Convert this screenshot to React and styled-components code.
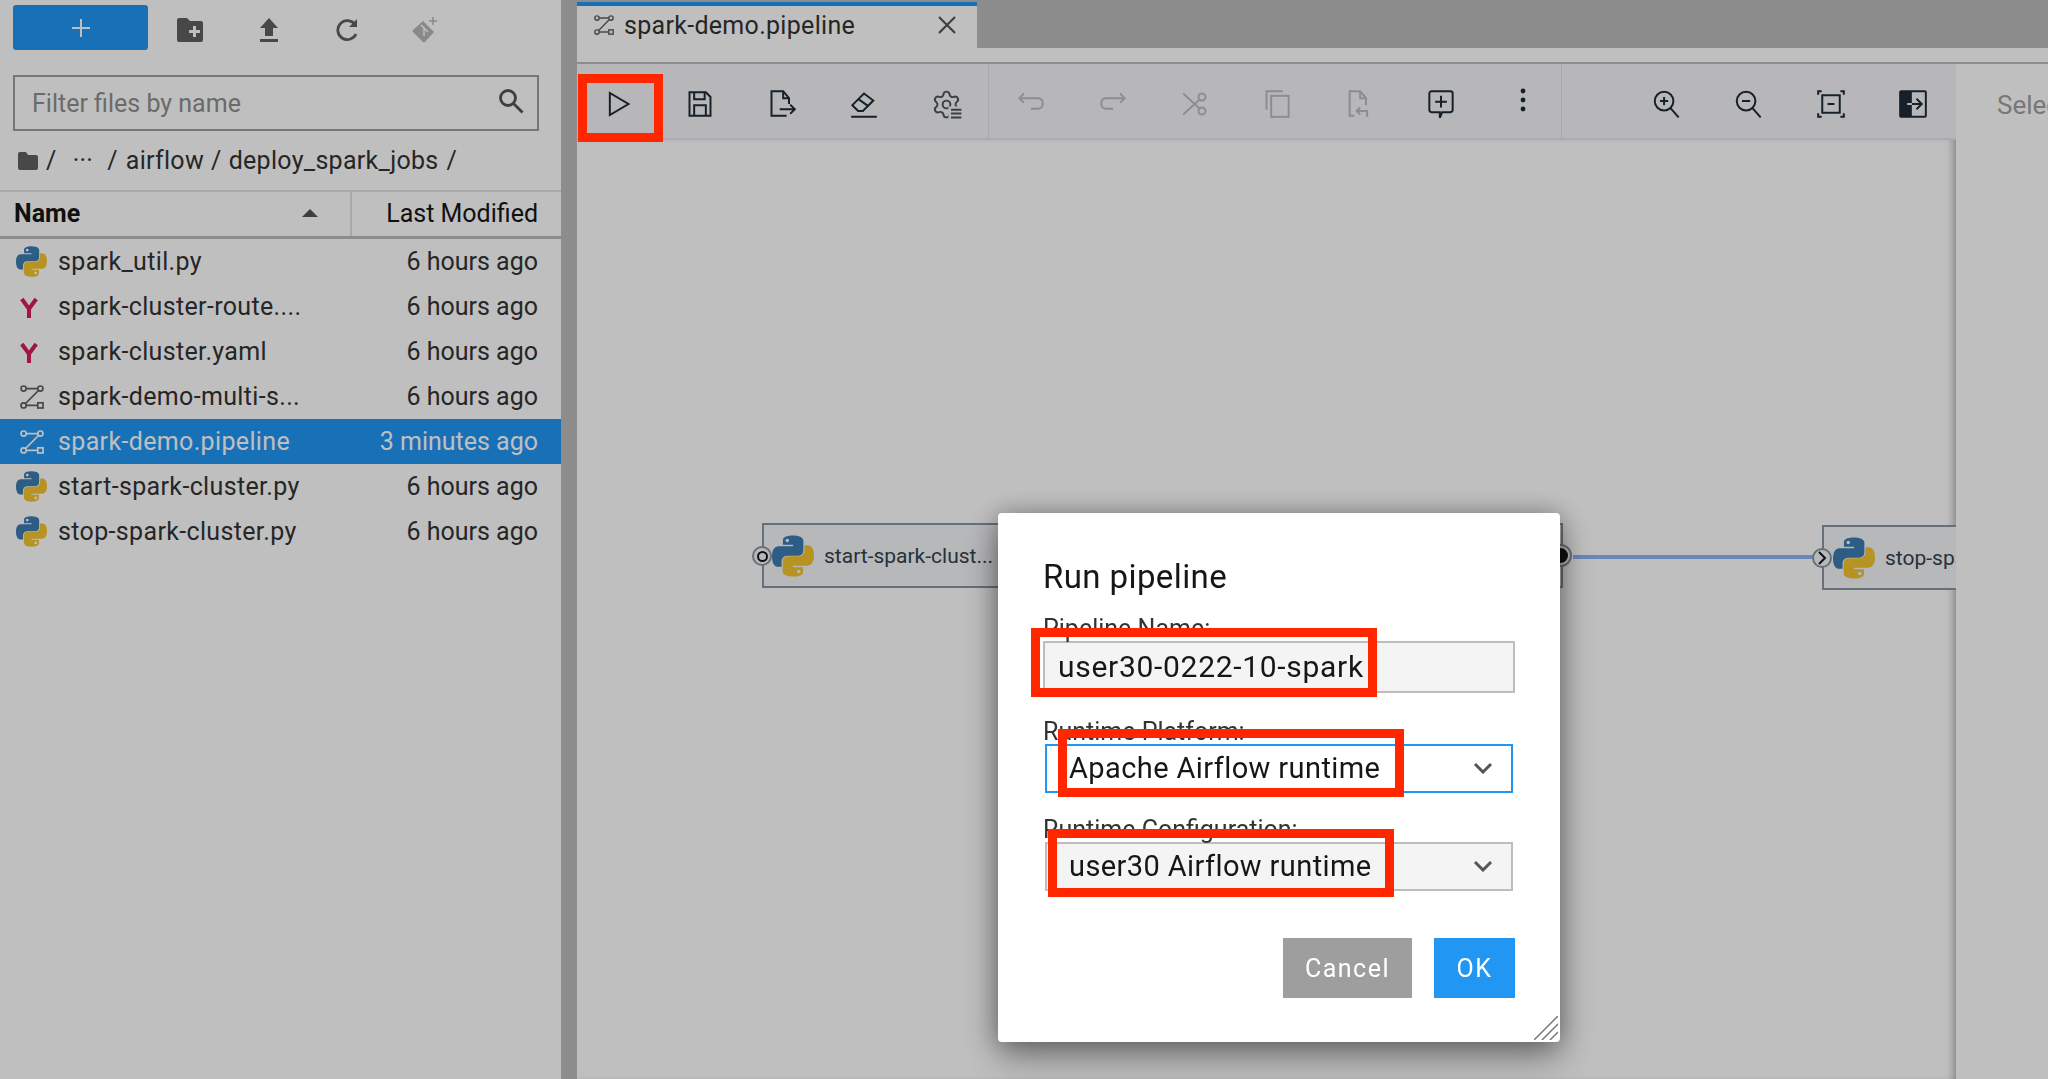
import React from "react";
import styled, { createGlobalStyle } from "styled-components";

const FONT = `Roboto, "Noto Sans", sans-serif`;

const GlobalStyle = createGlobalStyle`
  html, body { margin: 0; padding: 0; height: 100%; overflow: hidden; }
  body { font-family: ${FONT}; color: #161616; background: #fff; }
  * { box-sizing: border-box; }
`;

const Shell = styled.div`
  display: flex;
  width: 2048px;
  height: 1079px;
  overflow: hidden;
  background: #fff;
`;

/* ---------- file browser ---------- */
const Sidebar = styled.aside`
  width: 561px;
  flex: none;
  display: flex;
  flex-direction: column;
`;
const Actions = styled.div`
  display: flex;
  align-items: center;
  height: 56px;
  padding: 5px 0 6px 13px;
`;
const NewButton = styled.div`
  width: 135px;
  height: 45px;
  background: #2196f3;
  border-radius: 3px;
  display: flex;
  align-items: center;
  justify-content: center;
  margin-right: 2px;
`;
const ActionIcon = styled.div`
  width: 79px;
  display: flex;
  justify-content: center;
  padding-top: 4px;
  margin-left: ${(p) => (p.$disabled ? -2 : 0)}px;
  opacity: ${(p) => (p.$disabled ? 0.45 : 1)};
`;
const Search = styled.div`
  margin: 19px 22px 0 13px;
  height: 56px;
  border: 2px solid #9e9e9e;
  display: flex;
  align-items: center;
  justify-content: space-between;
  padding: 0 13px 0 17px;
  font-size: 25px;
  color: #8f8f8f;

  svg {
    margin-top: -5px;
  }
`;
const Crumbs = styled.div`
  display: flex;
  align-items: center;
  height: 59px;
  padding-left: 18px;
  font-size: 25px;
  letter-spacing: 0.3px;
  color: #333;
`;
const CrumbText = styled.span`
  margin-left: ${(p) => p.$gap || 0}px;
`;
const HeaderRow = styled.div`
  display: flex;
  height: 49px;
  border-top: 2px solid #e0e0e0;
  border-bottom: 3px solid #bdbdbd;
  padding-bottom: 2px;
  font-size: 25px;
`;
const NameHead = styled.div`
  width: 352px;
  display: flex;
  align-items: center;
  justify-content: space-between;
  padding: 0 34px 0 14px;
  font-weight: 700;
  position: relative;

  &::after {
    content: "";
    position: absolute;
    right: 0;
    top: 0;
    bottom: -2px;
    width: 2px;
    background: #e0e0e0;
  }
`;
const ModifiedHead = styled.div`
  flex: 1;
  display: flex;
  align-items: center;
  justify-content: flex-end;
  padding-right: 23px;
`;
const SortArrow = styled.span`
  width: 0;
  height: 0;
  border-left: 8px solid transparent;
  border-right: 8px solid transparent;
  border-bottom: 8px solid #555;
`;
const FileRow = styled.div`
  display: flex;
  align-items: center;
  height: 45px;
  padding-right: 23px;
  font-size: 25px;
  color: ${(p) => (p.$selected ? "#fff" : "#333")};
  background: ${(p) => (p.$selected ? "#2196f3" : "transparent")};
`;
const FileIcon = styled.span`
  width: 58px;
  flex: none;
  display: flex;
  justify-content: center;
  padding-left: 5px;
`;
const FileName = styled.span`
  flex: 1;
  letter-spacing: 0.35px;
`;

/* ---------- main area ---------- */
const Splitter = styled.div`
  width: 16px;
  flex: none;
  background: #bdbdbd;
`;
const Main = styled.main`
  flex: 1;
  display: flex;
  flex-direction: column;
  min-width: 0;
`;
const TabBar = styled.div`
  height: 48px;
  flex: none;
  background: #bdbdbd;
  padding-top: 2px;
`;
const Tab = styled.div`
  width: 400px;
  height: 46px;
  background: #fff;
  border-top: 4px solid #2196f3;
  display: flex;
  align-items: center;
  padding: 0 21px 4px 17px;
  font-size: 25px;
  color: #333;
  gap: 10px;
`;
const TabTitle = styled.span`
  flex: 1;
  letter-spacing: 0.3px;
`;
const Strip = styled.div`
  height: 16px;
  flex: none;
  border-bottom: 2px solid #bdbdbd;
`;
const Workspace = styled.div`
  flex: 1;
  display: flex;
  min-height: 0;
`;
const Editor = styled.div`
  width: 1379px;
  flex: none;
  display: flex;
  flex-direction: column;
`;
const Toolbar = styled.div`
  height: 76px;
  flex: none;
  display: flex;
  align-items: center;
  background: #f4f5f8;
  border-bottom: 2px solid #e4e6ea;
`;
const ToolGroup = styled.div`
  height: 100%;
  flex: none;
  width: ${(p) => (p.$w ? `${p.$w}px` : "auto")};
  display: flex;
  align-items: center;
  padding: 0 ${(p) => p.$padEnd || 0}px 0 ${(p) => p.$pad || 0}px;
  border-right: ${(p) => (p.$sep ? "1px solid #dfe1e5" : "none")};
`;
const ToolButton = styled.div`
  width: 82px;
  height: 100%;
  flex: none;
  display: flex;
  align-items: center;
  justify-content: center;
  padding-top: ${(p) => (p.$raised ? 0 : 6)}px;
  color: ${(p) => (p.$disabled ? "#b9bcc2" : p.$soft ? "#4a545c" : "#1d2b36")};
`;
const Canvas = styled.div`
  flex: 1;
  position: relative;
  overflow: hidden;
  background: #fff;
  box-shadow: inset -7px 0 8px -5px rgba(0, 0, 0, 0.35);
`;
const Node = styled.div`
  position: absolute;
  left: ${(p) => p.$x}px;
  top: ${(p) => p.$y}px;
  width: ${(p) => p.$w}px;
  height: 65px;
  background: #f5f6f9;
  border: 2px solid #8a96a0;
  display: flex;
  align-items: center;
  padding-left: ${(p) => p.$pad}px;
  gap: 10px;
  font-size: 21px;
  color: #33424e;
`;
const Port = styled.span`
  position: absolute;
  top: ${(p) => (p.$big ? 19 : 21)}px;
  left: ${(p) => p.$x}px;
  width: ${(p) => (p.$big ? 23 : 20)}px;
  height: ${(p) => (p.$big ? 23 : 20)}px;
  border-radius: 50%;
  background: #f5f6f9;
  border: 2px solid #8a96a0;
  display: flex;
  align-items: center;
  justify-content: center;
`;
const PortDot = styled.span`
  width: ${(p) => (p.$filled ? 15 : 11)}px;
  height: ${(p) => (p.$filled ? 15 : 11)}px;
  border-radius: 50%;
  background: ${(p) => (p.$filled ? "#161616" : "transparent")};
  border: 2px solid #161616;
`;
const Link = styled.div`
  position: absolute;
  left: 996px;
  top: 415px;
  width: 250px;
  height: 4px;
  background: #8cb4f5;
`;
const Palette = styled.div`
  flex: 1;
  display: flex;
  align-items: flex-start;
  padding: 26px 0 0 41px;
  font-size: 26px;
  color: #a0a0a0;
  white-space: nowrap;
  overflow: hidden;
`;

/* ---------- dialog ---------- */
const Backdrop = styled.div`
  position: fixed;
  inset: 0;
  background: rgba(0, 0, 0, 0.25);
`;
const Dialog = styled.div`
  position: absolute;
  left: 998px;
  top: 513px;
  width: 562px;
  height: 529px;
  background: #fff;
  border-radius: 4px;
  padding: 42px 45px 0 45px;
  box-shadow: 0 14px 36px rgba(0, 0, 0, 0.4), 0 0 24px rgba(0, 0, 0, 0.25);
`;
const DialogTitle = styled.h2`
  margin: 0;
  height: 44px;
  line-height: 44px;
  font-size: 33px;
  font-weight: 400;
  letter-spacing: 0.4px;
  color: #161616;
`;
const FieldLabel = styled.div`
  height: 28px;
  line-height: 31px;
  margin-top: ${(p) => p.$top}px;
  font-size: 25px;
  color: #333;
`;
const TextInput = styled.div`
  height: 52px;
  background: #f4f4f4;
  border: 2px solid #bdbdbd;
  display: flex;
  align-items: center;
  padding: 0 0 2px 13px;
  font-size: 30px;
  letter-spacing: 0.7px;
  color: #161616;
`;
const SelectBox = styled.div`
  height: 49px;
  width: 468px;
  margin-left: 2px;
  background: ${(p) => (p.$focused ? "#fff" : "#f4f4f4")};
  border: 2px solid ${(p) => (p.$focused ? "#2196f3" : "#bdbdbd")};
  display: flex;
  align-items: center;
  justify-content: space-between;
  padding: 0 18px 2px 22px;
  font-size: 29px;
  letter-spacing: 0.4px;
  color: #161616;
`;
const ButtonRow = styled.div`
  display: flex;
  justify-content: flex-end;
  gap: 22px;
  margin-top: 47px;
`;
const DialogButton = styled.div`
  height: 60px;
  width: ${(p) => p.$w}px;
  background: ${(p) => p.$bg};
  color: #fff;
  display: flex;
  align-items: center;
  justify-content: center;
  font-size: 25px;
  letter-spacing: 1.5px;
`;
const Grip = styled.svg`
  position: absolute;
  right: 2px;
  bottom: 2px;
`;
const RedBox = styled.div`
  position: absolute;
  left: ${(p) => p.$x}px;
  top: ${(p) => p.$y}px;
  width: ${(p) => p.$w}px;
  height: ${(p) => p.$h}px;
  border: 9px solid #ff2600;
`;

/* ---------- drawings ---------- */
const PY =
  "M54.9 1C26.9 1 28.6 13.2 28.6 13.2v12.6h26.7v3.8H18S0 27.6 0 56c0 28.4 15.7 27.4 15.7 27.4h9.4V70.2s-.5-15.7 15.5-15.7h26.6s15 .2 15-14.5V15.7S84 1 54.9 1zM40 9.5a4.8 4.8 0 1 1 0 9.6 4.8 4.8 0 0 1 0-9.6z";

const PythonIcon = ({ size = 31 }) => (
  <svg width={size} height={size} viewBox="0 0 110 110" style={{ flex: "none" }}>
    <path d={PY} fill="#3c7bb0" fillRule="evenodd" />
    <path d={PY} fill="#f5c52f" fillRule="evenodd" transform="rotate(180 55 55)" />
  </svg>
);

const YamlIcon = () => (
  <svg width="18" height="22" viewBox="0 0 20 24" style={{ marginRight: 5, marginTop: 2 }}>
    <path d="M2 2l8 11 8-11M10 13v10" fill="none" stroke="#d81b60" strokeWidth="4.500" />
  </svg>
);

const PipelineIcon = ({ color = "#616161", size = 24 }) => (
  <svg width={size} height={size} viewBox="0 0 24 24" fill="none" stroke={color} strokeWidth="1.7">
    <circle cx="3.6" cy="3.6" r="2.6" />
    <circle cx="20.4" cy="3.6" r="2.6" />
    <circle cx="3.6" cy="20.4" r="2.6" />
    <rect x="17.8" y="17.8" width="5.2" height="5.2" />
    <path d="M6.2 3.6h11.6M18.5 5.5L5.5 18.5M6.2 20.4h11.6" />
  </svg>
);

const Stroke = ({ children, size = 28, w = 1.7 }) => (
  <svg width={size} height={size} viewBox="0 0 24 24" fill="none" stroke="currentColor" strokeWidth={w}>
    {children}
  </svg>
);

const ZoomGlass = ({ plus }) => (
  <Stroke>
    <circle cx="9.5" cy="9.5" r="8" />
    <path d="M15 15.5l7 8M6 9.5h7" />
    {plus && <path d="M9.5 6v7" />}
  </Stroke>
);

const GEAR =
  "M9.671 4.136a2.34 2.34 0 0 1 4.659 0 2.34 2.34 0 0 0 3.319 1.915 2.34 2.34 0 0 1 2.33 4.033 2.34 2.34 0 0 0 0 3.831 2.34 2.34 0 0 1-2.33 4.033 2.34 2.34 0 0 0-3.319 1.915 2.34 2.34 0 0 1-4.659 0 2.34 2.34 0 0 0-3.319-1.915 2.34 2.34 0 0 1-2.33-4.033 2.34 2.34 0 0 0 0-3.831A2.34 2.34 0 0 1 6.35 6.051a2.34 2.34 0 0 0 3.319-1.915";

const toolsLeft = [
  <Stroke key="run"><path d="M5 2.5v19L21 12z" /></Stroke>,
  <Stroke key="save">
    <path d="M3 2h14l4 4v16H3z" />
    <path d="M7 2v6h9V2M7 22v-9h10v9" />
  </Stroke>,
  <Stroke key="export">
    <path d="M16 22H3V1h10l5 6v5M13 1v6h5" />
    <path d="M10 16.500h13M19 12.500l4 4-4 4" />
  </Stroke>,
  <Stroke key="clear">
    <path d="M2 13l10-10 8 6-9 9H7z" />
    <path d="M7.500 8l8.500 6M1 23h22" />
  </Stroke>,
];

const toolsEdit = [
  <Stroke key="undo"><path d="M6 3L2 7l4 4M2 7h16a4 4 0 0 1 4 4v1a4 4 0 0 1-4 4h-6" /></Stroke>,
  <Stroke key="redo"><path d="M18 3l4 4-4 4M22 7H6a4 4 0 0 0-4 4v1a4 4 0 0 0 4 4h6" /></Stroke>,
  <Stroke key="cut">
    <circle cx="18" cy="6" r="3" />
    <circle cx="18" cy="18" r="3" />
    <path d="M2 3l14 13M2 21L16 8" />
  </Stroke>,
  <Stroke key="copy">
    <path d="M3 17V1h14" />
    <rect x="7" y="5" width="15" height="18" />
  </Stroke>,
  <Stroke key="paste">
    <path d="M8 22H4V1h9l5 6v6M13 1v6h5" />
    <path d="M13 15l-3 3 3 3M10 18h9v5" />
  </Stroke>,
];

const PipelineToolbar = () => (
  <Toolbar>
    <ToolGroup $sep $w={412}>
      {toolsLeft.map((icon, i) => (
        <ToolButton key={i}>{icon}</ToolButton>
      ))}
      <ToolButton $soft>
        <Stroke size={31} w={1.5}>
          <path d={GEAR} />
          <circle cx="12" cy="12" r="3" />
          <rect x="13.500" y="13.500" width="10.500" height="10.500" fill="#f4f5f8" stroke="none" />
          <path d="M15.500 16h8M15.500 19h8M15.500 22h8" />
        </Stroke>
      </ToolButton>
    </ToolGroup>
    <ToolGroup $sep $w={573} $pad={1}>
      {toolsEdit.map((icon, i) => (
        <ToolButton key={i} $disabled>{icon}</ToolButton>
      ))}
      <ToolButton>
        <Stroke>
          <path d="M4 1h16a2 2 0 0 1 2 2v14a2 2 0 0 1-2 2h-7l-2 5v-5H4a2 2 0 0 1-2-2V3a2 2 0 0 1 2-2zM12 5v10M7 10h10" />
        </Stroke>
      </ToolButton>
      <ToolButton $raised>
        <svg width="6" height="28" viewBox="0 0 6 28" fill="currentColor">
          <circle cx="3" cy="4" r="2.400" />
          <circle cx="3" cy="13" r="2.400" />
          <circle cx="3" cy="22" r="2.400" />
        </svg>
      </ToolButton>
    </ToolGroup>
    <ToolGroup $pad={64}>
      <ToolButton><ZoomGlass plus /></ToolButton>
      <ToolButton><ZoomGlass /></ToolButton>
      <ToolButton>
        <Stroke>
          <path d="M1 4V1h3M20 1h3v3M1 20v3h3M20 23h3v-3" />
          <rect x="4.500" y="4.500" width="15" height="15" />
          <path d="M9 12h6" />
        </Stroke>
      </ToolButton>
      <ToolButton>
        <svg width="28" height="28" viewBox="0 0 24 24">
          <rect x="1" y="1" width="22" height="22" rx="1" fill="none" stroke="currentColor" strokeWidth="1.700" />
          <rect x="1" y="1" width="10" height="22" fill="currentColor" />
          <path d="M15 7.500l4.500 4.500-4.500 4.500M11 12h8" fill="none" stroke="currentColor" strokeWidth="1.700" />
          <path d="M7 12h4" fill="none" stroke="#f4f5f8" strokeWidth="1.700" />
        </svg>
      </ToolButton>
    </ToolGroup>
  </Toolbar>
);

const Chevron = () => (
  <svg width="20" height="12" viewBox="0 0 20 12" fill="none" stroke="#555" strokeWidth="3">
    <path d="M2 2l8 8 8-8" />
  </svg>
);

const files = [
  { name: "spark_util.py", type: "py", time: "6 hours ago" },
  { name: "spark-cluster-route....", type: "yaml", time: "6 hours ago" },
  { name: "spark-cluster.yaml", type: "yaml", time: "6 hours ago" },
  { name: "spark-demo-multi-s...", type: "pipeline", time: "6 hours ago" },
  { name: "spark-demo.pipeline", type: "pipeline", time: "3 minutes ago", selected: true },
  { name: "start-spark-cluster.py", type: "py", time: "6 hours ago" },
  { name: "stop-spark-cluster.py", type: "py", time: "6 hours ago" },
];

function renderFileIcon(file) {
  if (file.type === "py") return <PythonIcon />;
  if (file.type === "yaml") return <YamlIcon />;
  return <PipelineIcon color={file.selected ? "#fff" : "#616161"} />;
}

export default function App() {
  return (
    <>
      <GlobalStyle />
      <Shell>
        <Sidebar>
          <Actions>
            <NewButton>
              <svg width="22" height="22" viewBox="0 0 22 22" stroke="#fff" strokeWidth="2">
                <path d="M11 2v18M2 11h18" />
              </svg>
            </NewButton>
            <ActionIcon>
              <svg width="26" height="24" viewBox="0 0 26 24" fill="#616161">
                <path d="M2 0h8l3 3h11a2 2 0 0 1 2 2v17a2 2 0 0 1-2 2H2a2 2 0 0 1-2-2V2a2 2 0 0 1 2-2z" />
                <path d="M16 8h3v4h4v3h-4v4h-3v-4h-4v-3h4z" fill="#fff" />
              </svg>
            </ActionIcon>
            <ActionIcon>
              <svg width="20" height="24" viewBox="0 0 20 24" fill="#616161">
                <path d="M10 0l9 10h-5v8H6v-8H1zM1 21h18v3H1z" />
              </svg>
            </ActionIcon>
            <ActionIcon>
              <svg width="24" height="24" viewBox="0 0 24 24" fill="none" stroke="#616161" strokeWidth="2.800">
                <path d="M20 16a9.500 9.500 0 1 1-1-9.500" />
                <path d="M21 1v8h-8" fill="#616161" stroke="none" />
              </svg>
            </ActionIcon>
            <ActionIcon $disabled>
              <svg width="28" height="28" viewBox="0 0 28 28" fill="#616161">
                <path d="M12 5l11 11-9 10a2 2 0 0 1-2 0L2 16a2 2 0 0 1 0-2z" />
                <path d="M10 9l3 3v8M13 12l4 4" stroke="#fff" strokeWidth="1.500" fill="none" />
                <path d="M22 1v8M18 5h8" stroke="#616161" strokeWidth="1.500" />
              </svg>
            </ActionIcon>
          </Actions>
          <Search>
            Filter files by name
            <svg width="26" height="26" viewBox="0 0 26 26" fill="none" stroke="#555" strokeWidth="2.800">
              <circle cx="10" cy="10" r="7.500" />
              <path d="M15.500 15.500l9 9" />
            </svg>
          </Search>
          <Crumbs>
            <svg width="20" height="18" viewBox="0 0 20 18" fill="#616161">
              <path d="M2 0h6l2 3h8a2 2 0 0 1 2 2v11a2 2 0 0 1-2 2H2a2 2 0 0 1-2-2V2a2 2 0 0 1 2-2z" />
            </svg>
            <CrumbText $gap={8}>/</CrumbText>
            <CrumbText $gap={16}>···</CrumbText>
            <CrumbText $gap={14}>/</CrumbText>
            <CrumbText $gap={8}>airflow</CrumbText>
            <CrumbText $gap={7}>/</CrumbText>
            <CrumbText $gap={7}>deploy_spark_jobs</CrumbText>
            <CrumbText $gap={8}>/</CrumbText>
          </Crumbs>
          <HeaderRow>
            <NameHead>
              Name
              <SortArrow />
            </NameHead>
            <ModifiedHead>Last Modified</ModifiedHead>
          </HeaderRow>
          {files.map((file) => (
            <FileRow key={file.name} $selected={file.selected}>
              <FileIcon>{renderFileIcon(file)}</FileIcon>
              <FileName>{file.name}</FileName>
              {file.time}
            </FileRow>
          ))}
        </Sidebar>
        <Splitter />
        <Main>
          <TabBar>
            <Tab>
              <PipelineIcon size={20} />
              <TabTitle>spark-demo.pipeline</TabTitle>
              <svg width="18" height="18" viewBox="0 0 18 18" stroke="#555" strokeWidth="2.200">
                <path d="M1 1l16 16M17 1L1 17" />
              </svg>
            </Tab>
          </TabBar>
          <Strip />
          <Workspace>
            <Editor>
              <PipelineToolbar />
              <Canvas>
                <Link />
                <Node $x={185} $y={383} $w={801} $pad={8}>
                  <Port $x={-12}><PortDot /></Port>
                  <PythonIcon size={42} />
                  start-spark-clust...
                  <Port $x={785} $big><PortDot $filled /></Port>
                </Node>
                <Node $x={1245} $y={385} $w={300} $pad={9}>
                  <Port $x={-12}>
                    <svg width="10" height="14" viewBox="0 0 10 14" fill="none" stroke="#161616" strokeWidth="2">
                      <path d="M2 1l6 6-6 6" />
                    </svg>
                  </Port>
                  <PythonIcon size={42} />
                  stop-spark-cluster
                </Node>
              </Canvas>
            </Editor>
            <Palette>Select</Palette>
          </Workspace>
        </Main>
      </Shell>
      <Backdrop>
        <Dialog>
          <DialogTitle>Run pipeline</DialogTitle>
          <FieldLabel $top={14}>Pipeline Name:</FieldLabel>
          <TextInput>user30-0222-10-spark</TextInput>
          <FieldLabel $top={23}>Runtime Platform:</FieldLabel>
          <SelectBox $focused>
            Apache Airflow runtime
            <Chevron />
          </SelectBox>
          <FieldLabel $top={21}>Runtime Configuration:</FieldLabel>
          <SelectBox>
            user30 Airflow runtime
            <Chevron />
          </SelectBox>
          <ButtonRow>
            <DialogButton $w={129} $bg="#9e9e9e">Cancel</DialogButton>
            <DialogButton $w={81} $bg="#2196f3">OK</DialogButton>
          </ButtonRow>
          <Grip width="24" height="24" viewBox="0 0 24 24" stroke="#777" strokeWidth="1.500">
            <path d="M0 24L24 0M8 24L24 8M16 24l8-8" />
          </Grip>
        </Dialog>
      </Backdrop>
      <RedBox $x={578} $y={74} $w={85} $h={68} />
      <RedBox $x={1031} $y={628} $w={346} $h={69} />
      <RedBox $x={1058} $y={729} $w={346} $h={68} />
      <RedBox $x={1048} $y={829} $w={346} $h={68} />
    </>
  );
}
